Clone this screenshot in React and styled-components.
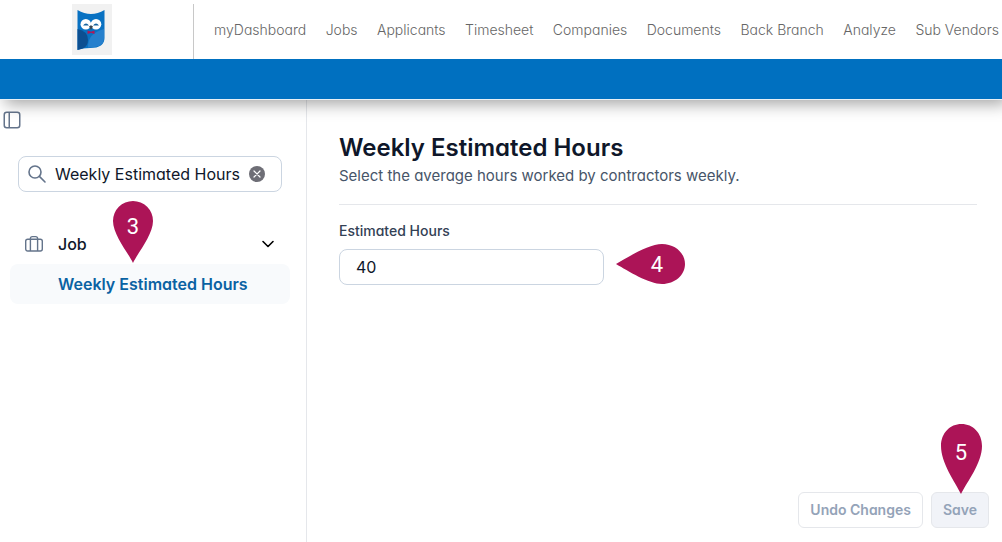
import { useState } from "react";
import styled, { createGlobalStyle } from "styled-components";

const GlobalStyle = createGlobalStyle`
  * {
    box-sizing: border-box;
  }
  body {
    margin: 0;
    background-color: #fff;
    font-family: Inter, "Liberation Sans", sans-serif;
    font-feature-settings: "cv11";
    font-size: 16px;
    line-height: 24px;
    color: #0f172a;
  }
  button, input {
    font: inherit;
    font-feature-settings: inherit;
    color: inherit;
  }
  h1, p {
    margin: 0;
  }
`;

const Page = styled.div`
  display: flex;
  flex-direction: column;
  min-height: 100vh;
`;

const Header = styled.header`
  position: relative;
  z-index: 1;
  border-bottom: 1px solid #e8f0f5;
  box-shadow: 5px 4px 15px rgba(0, 0, 0, 0.36);
`;

const TopBar = styled.div`
  display: flex;
  height: 59px;
  padding-top: 4px;
  background-color: #fff;
`;

const Brand = styled.a`
  flex: none;
  width: 194px;
  padding-left: 72px;
  border-right: 1px solid #c8c8c8;

  svg {
    display: block;
  }
`;

const Nav = styled.nav`
  display: flex;
  flex: 1;
  align-items: center;
  justify-content: space-between;
  padding: 0 3px 4px 20px;
`;

const NavLink = styled.a`
  color: #666;
  font-size: 14px;
  font-weight: 300;
  line-height: 20px;
  text-decoration: none;
  white-space: nowrap;
`;

const BlueBar = styled.div`
  height: 40px;
  background-color: #0070c0;
`;

const Body = styled.div`
  display: flex;
  flex: 1;
`;

const Sidebar = styled.aside`
  flex: none;
  width: 307px;
  padding: 11px 16px 0 0;
  border-right: 1px solid #e5e7eb;
`;

const IconButton = styled.button`
  display: flex;
  padding: 0;
  border: none;
  background-color: transparent;
  color: #64748b;
  cursor: pointer;
`;

const ToggleButton = styled(IconButton)`
  margin-left: 3px;
`;

const SearchBox = styled.div`
  display: flex;
  align-items: center;
  gap: 8px;
  height: 36px;
  margin: 27px 8px 0 18px;
  padding: 0 16px 0 8px;
  border: 1px solid #cbd5e1;
  border-radius: 8px;
  color: #64748b;

  svg {
    flex: none;
  }
`;

const SearchInput = styled.input`
  flex: 1;
  min-width: 0;
  padding: 0;
  border: none;
  outline: none;
  background-color: transparent;
  color: #0f172a;
`;

const Menu = styled.div`
  padding: 32px 0 0 10px;
`;

const GroupButton = styled.button`
  position: relative;
  display: flex;
  align-items: center;
  gap: 14px;
  width: 100%;
  height: 40px;
  padding: 0 14px;
  border: none;
  background-color: transparent;
  font-weight: 500;
  text-align: left;
  cursor: pointer;
`;

const GroupName = styled.span`
  flex: 1;
`;

const MenuLink = styled.a`
  display: block;
  padding: 8px 8px 8px 48px;
  border-radius: 8px;
  background-color: #f8fafc;
  color: #0a62a3;
  font-weight: 600;
  text-decoration: none;
`;

const Content = styled.main`
  display: flex;
  flex: 1;
  flex-direction: column;
  justify-content: space-between;
  padding: 32px 13px 14px 32px;
`;

const Settings = styled.form`
  padding-right: 12px;
`;

const Title = styled.h1`
  font-size: 24px;
  font-weight: 600;
  line-height: 32px;
`;

const Description = styled.p`
  padding-bottom: 16px;
  border-bottom: 1px solid #e5e7eb;
  color: #475569;
  font-size: 15px;
`;

const Field = styled.div`
  position: relative;
  display: flex;
  flex-direction: column;
  gap: 8px;
  width: 265px;
  margin-top: 16px;
`;

const Label = styled.label`
  color: #334155;
  font-size: 14px;
  font-weight: 500;
  line-height: 20px;
`;

const TextInput = styled.input`
  width: 100%;
  height: 36px;
  padding: 0 16px;
  border: 1px solid #cbd5e1;
  border-radius: 8px;
  background-color: #fff;
`;

const Actions = styled.div`
  display: flex;
  justify-content: flex-end;
  gap: 8px;
`;

const ActionButton = styled.button`
  position: relative;
  height: 36px;
  padding: 0 11px;
  border: 1px solid #e5e7eb;
  border-radius: 6px;
  background-color: ${(props) => (props.$filled ? "#f1f3f8" : "#fff")};
  color: #94a3b8;
  font-size: 14px;
  font-weight: 600;
`;

const Pin = styled.span`
  position: absolute;
  top: ${(props) => props.$top};
  left: ${(props) => props.$left};
  display: flex;
  pointer-events: none;

  text {
    fill: #fff;
    font-family: Roboto, "Liberation Sans", sans-serif;
    font-size: 22px;
    font-weight: 400;
    text-anchor: middle;
  }
`;

const links = [
  "myDashboard",
  "Jobs",
  "Applicants",
  "Timesheet",
  "Companies",
  "Documents",
  "Back Branch",
  "Analyze",
  "Sub Vendors",
];

function OwlLogo() {
  return (
    <svg width="40" height="51" viewBox="0 0 40 51" role="img" aria-label="Owl">
      <rect width="40" height="51" fill="#f1f1f1" />
      <path d="M5.500 6Q19 14 32.500 6V34Q32.500 44 18 44Q10 44 5.500 46Z" fill="#0871c2" />
      <path d="M16 43Q16 29 32 25V34Q32 43.500 16 43.500Z" fill="#2680cd" />
      <path d="M5.500 25Q16 27 16 36Q16 42 11 44.500L5.500 46Z" fill="#0c4f91" />
      <circle cx="13.8" cy="20.300" r="5.300" fill="#fff" />
      <circle cx="24" cy="20.300" r="5.300" fill="#fff" />
      <path d="M11 21.500Q14 17.500 17 21.500ZM21 21.500Q24 17.500 27 21.500Z" fill="#17649f" />
      <path d="M17 22.500L19 21.300L21 22.500L19 26Z" fill="#3a4650" />
      <path d="M15.500 26.500L19 27.800L22.500 26.500V30L19 28.800L15.500 30Z" fill="#b51655" />
    </svg>
  );
}

function PanelIcon() {
  return (
    <svg width="18" height="18" viewBox="0 0 18 18" fill="none" stroke="currentColor" strokeWidth="1.5">
      <rect x="1.25" y="1.25" width="15.5" height="15.5" rx="2.5" />
      <path d="M6.25 1.25V16.75" />
    </svg>
  );
}

function SearchIcon() {
  return (
    <svg width="20" height="20" viewBox="0 0 20 20" fill="none" stroke="currentColor" strokeWidth="1.6" strokeLinecap="round">
      <circle cx="8" cy="8" r="6" />
      <path d="M12.4 12.4L18 18" />
    </svg>
  );
}

function ClearIcon() {
  return (
    <svg width="16" height="16" viewBox="0 0 16 16">
      <circle cx="8" cy="8" r="8" fill="#6e6e76" />
      <path d="M5 5L11 11M11 5L5 11" stroke="#fff" strokeWidth="1.2" strokeLinecap="round" />
    </svg>
  );
}

function JobIcon() {
  return (
    <svg width="20" height="20" viewBox="0 0 20 20" fill="none" stroke="#64748b" strokeWidth="1.4">
      <rect x="1.7" y="5.2" width="16.6" height="11.8" rx="2" />
      <path d="M6.4 17V4.6Q6.4 2.6 8.4 2.6H11.6Q13.6 2.6 13.6 4.6V17" />
    </svg>
  );
}

function ChevronIcon() {
  return (
    <svg width="16" height="16" viewBox="0 0 16 16" fill="none" stroke="#000" strokeWidth="1.6" strokeLinecap="round" strokeLinejoin="round">
      <path d="M3 5.5L8 10.5L13 5.5" />
    </svg>
  );
}

function App() {
  const [search, setSearch] = useState("Weekly Estimated Hours");
  const [hours, setHours] = useState("40");

  return (
    <>
      <GlobalStyle />
      <Page>
        <Header>
          <TopBar>
            <Brand href="#">
              <OwlLogo />
            </Brand>
            <Nav>
              {links.map((link) => (
                <NavLink key={link} href="#">{link}</NavLink>
              ))}
            </Nav>
          </TopBar>
          <BlueBar />
        </Header>
        <Body>
          <Sidebar>
            <ToggleButton type="button" aria-label="Toggle sidebar">
              <PanelIcon />
            </ToggleButton>
            <SearchBox>
              <SearchIcon />
              <SearchInput
                type="text"
                aria-label="Search settings"
                value={search}
                onChange={(e) => setSearch(e.target.value)}
              />
              <IconButton type="button" aria-label="Clear search" onClick={() => setSearch("")}>
                <ClearIcon />
              </IconButton>
            </SearchBox>
            <Menu>
              <GroupButton type="button" aria-expanded="true">
                <JobIcon />
                <GroupName>Job</GroupName>
                <ChevronIcon />
                <Pin $top="-24px" $left="102px">
                  <svg width="42" height="64" viewBox="0 0 42 64">
                    <path d="M21 63C17 54 1 35 1 21A20 20 0 0 1 41 21C41 35 25 54 21 63Z" fill="#ac1457" />
                    <text x="21" y="34">3</text>
                  </svg>
                </Pin>
              </GroupButton>
              <MenuLink href="#">Weekly Estimated Hours</MenuLink>
            </Menu>
          </Sidebar>
          <Content>
            <Settings>
              <Title>Weekly Estimated Hours</Title>
              <Description>Select the average hours worked by contractors weekly.</Description>
              <Field>
                <Label htmlFor="hours">Estimated Hours</Label>
                <TextInput
                  id="hours"
                  type="text"
                  value={hours}
                  onChange={(e) => setHours(e.target.value)}
                />
                <Pin $top="22px" $left="276px">
                  <svg width="71" height="42" viewBox="0 0 71 42">
                    <path d="M1 21C13 14 34 1 47 1C60 1 70 10 70 21C70 32 60 41 47 41C34 41 13 28 1 21Z" fill="#ac1457" />
                    <text x="42" y="29">4</text>
                  </svg>
                </Pin>
              </Field>
            </Settings>
            <Actions>
              <ActionButton type="button">Undo Changes</ActionButton>
              <ActionButton type="button" $filled>
                Save
                <Pin $top="-70px" $left="8px">
                  <svg width="43" height="72" viewBox="0 0 43 72">
                    <path d="M21 71C15 59 1 40 1 23C1 10 10 1 21.500 1C33 1 42 10 42 23C42 40 27 59 21 71Z" fill="#ac1457" />
                    <text x="21" y="37">5</text>
                  </svg>
                </Pin>
              </ActionButton>
            </Actions>
          </Content>
        </Body>
      </Page>
    </>
  );
}

export default App;
